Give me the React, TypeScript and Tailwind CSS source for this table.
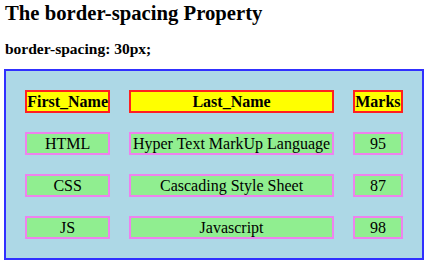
export default function App() {
  const rows = [
    ["HTML", "Hyper Text MarkUp Language", "95"],
    ["CSS", "Cascading Style Sheet", "87"],
    ["JS", "Javascript", "98"],
  ];
  return (
    <div className="px-[4px] text-black" style={{ fontFamily: '"Liberation Serif", serif' }}>
      <h2 className="text-[20.7px] font-bold leading-[24px] pt-[1px] pl-[1px]">The border-spacing Property</h2>
      <h4 className="text-[15.5px] font-bold leading-[18px] mt-[15px] pl-[1px]">border-spacing: 30px;</h4>
      <table className="mt-[11px] border-separate border-spacing-[19px] border-2 border-[#3030ff] bg-[#add8e6] w-[420px] text-[16px]">
        <thead>
          <tr>
            <th className="w-[85px] h-[23px] p-0 border-2 border-[#ff2020] bg-[#ffff00] font-bold leading-[19px]">First_Name</th>
            <th className="w-[204px] h-[23px] p-0 border-2 border-[#ff2020] bg-[#ffff00] font-bold leading-[19px]">Last_Name</th>
            <th className="w-[50px] h-[23px] p-0 border-2 border-[#ff2020] bg-[#ffff00] font-bold leading-[19px]">Marks</th>
          </tr>
        </thead>
        <tbody>
          {rows.map((r) => (
            <tr key={r[0]}>
              {r.map((c, i) => (
                <td key={i} className="h-[23px] p-0 text-center border-2 border-[#ee82ee] bg-[#90ee90] leading-[19px]">{c}</td>
              ))}
            </tr>
          ))}
        </tbody>
      </table>
    </div>
  );
}
